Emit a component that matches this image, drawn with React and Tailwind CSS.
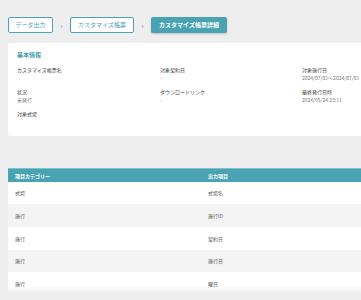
export default function App() {
  const info = [
    [
      { label: "カスタマイズ帳票名", value: "" },
      { label: "対象契約日", value: "-" },
      { label: "対象施行日", value: "2024/07/01〜2024/07/01" },
    ],
    [
      { label: "状況", value: "未発行" },
      { label: "ダウンロードリンク", value: "-" },
      { label: "最終発行日時", value: "2024/05/24 23:11" },
    ],
    [
      { label: "対象式場", value: "" },
      { label: "", value: "" },
      { label: "", value: "" },
    ],
  ];

  const rows = [
    { cat: "式場", item: "式場名", h: "h-[22px]" },
    { cat: "施行", item: "施行ID", h: "h-[23px]" },
    { cat: "施行", item: "契約日", h: "h-[23px]" },
    { cat: "施行", item: "施行日", h: "h-[22px]" },
    { cat: "施行", item: "曜日", h: "h-[23px]" },
  ];

  return (
    <div
      className="w-[361px] h-[300px] overflow-hidden bg-[#eeeeee] text-[#444]"
      style={{ fontFamily: '"Noto Sans CJK JP", "Noto Sans", sans-serif' }}
    >
      <div className="w-[460px] pl-[8px] pt-[17px]">
        {/* パンくず */}
        <div className="flex items-center h-[16px]">
          <div className="h-[16px] w-[45px] flex items-center justify-center bg-white border border-[#4aa3b3] rounded-[2px] text-[#4aa3b3] text-[6px] leading-none">
            データ出力
          </div>
          <span className="w-[17px] text-center text-[7px] text-[#777] leading-none">›</span>
          <div className="h-[16px] w-[64px] flex items-center justify-center bg-white border border-[#4aa3b3] rounded-[2px] text-[#4aa3b3] text-[6px] leading-none">
            カスタマイズ帳票
          </div>
          <span className="w-[17px] text-center text-[7px] text-[#777] leading-none">›</span>
          <div className="h-[16px] w-[76px] flex items-center justify-center bg-[#4aa3b3] rounded-[2px] text-white text-[6px] font-bold leading-none shadow-[0_1px_2px_rgba(0,0,0,0.2)]">
            カスタマイズ帳票詳細
          </div>
        </div>

        {/* 基本情報 */}
        <div className="mt-[10px] bg-white rounded-[3px] pt-[8px] pb-[9px] pl-[9px] h-[93px]">
          <div className="h-[8px] leading-[8px] text-[6px] font-bold text-[#4aa3b3]">基本情報</div>
          <div className="mt-[7px] flex flex-col gap-[6px]">
            {info.map((row, i) => (
              <div key={i} className="grid grid-cols-[143px_142px_142px]">
                {row.map((c, j) => (
                  <div key={j}>
                    <div className="h-[8px] leading-[8px] text-[5px] text-[#444]">{c.label}</div>
                    <div className="h-[8px] leading-[8px] text-[5px] text-[#777] whitespace-nowrap">{c.value}</div>
                  </div>
                ))}
              </div>
            ))}
          </div>
        </div>

        {/* 出力項目テーブル */}
        <div className="mt-[32px] bg-white">
          <div className="h-[14px] flex items-center bg-[#4aa3b3] border-t border-[#7fc2cd] text-white text-[5px] font-bold">
            <div className="w-[200px] pl-[7px]">項目カテゴリー</div>
            <div className="flex-1">出力項目</div>
          </div>
          {rows.map((r, i) => (
            <div
              key={i}
              className={`${r.h} flex items-center text-[5px] text-[#555] ${
                i === rows.length - 1
                  ? "bg-gradient-to-b from-white from-60% to-[#ececec]"
                  : i % 2 === 1
                  ? "bg-[#f4f4f4]"
                  : "bg-white"
              }`}
            >
              <div className="w-[200px] pl-[7px]">{r.cat}</div>
              <div className="flex-1">{r.item}</div>
            </div>
          ))}
        </div>
      </div>
    </div>
  );
}
